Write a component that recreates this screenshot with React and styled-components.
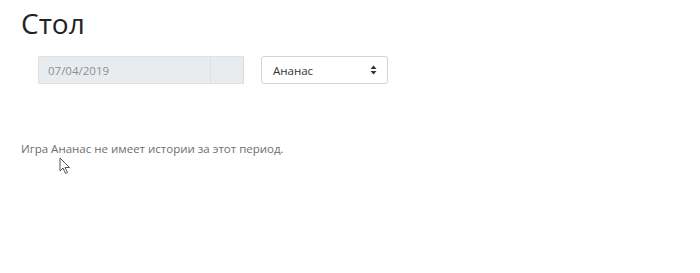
import React from "react";
import styled, { createGlobalStyle } from "styled-components";

const Global = createGlobalStyle`
  html, body { margin: 0; padding: 0; background: #fff; }
  body { font-family: "Open Sans", "Noto Sans", sans-serif; color: #212529; }
`;

const Page = styled.div`
  position: relative;
  width: 700px;
  height: 273px;
  padding: 0 0 0 21px;
  box-sizing: border-box;
`;

const Title = styled.h1`
  margin: 0;
  padding-top: 4px;
  font-size: 28px;
  font-weight: 400;
  line-height: 38px;
  color: #222;
`;

const Controls = styled.div`
  display: flex;
  align-items: center;
  gap: 17px;
  margin-top: 14px;
  padding-left: 17px;
`;

const DateGroup = styled.div`
  display: flex;
  width: 206px;
  height: 28px;
  background: #e9ecef;
  border: 1px solid #dee2e6;
  border-right-color: #d4d7db;
  border-radius: 1px;
  box-sizing: border-box;
`;

const DateText = styled.div`
  flex: 1;
  display: flex;
  align-items: center;
  padding-left: 9px;
  font-size: 11.5px;
  color: #8a9096;
  border-right: 1px solid #dcdfe3;
`;

const DateButton = styled.div`
  width: 32px;
`;

const Select = styled.div`
  display: flex;
  align-items: center;
  justify-content: space-between;
  width: 127px;
  height: 28px;
  padding: 0 10px 0 11px;
  box-sizing: border-box;
  border: 1px solid #ced4da;
  border-radius: 3px;
  font-size: 11.5px;
  color: #333;
`;

const Message = styled.p`
  margin: 57px 0 0;
  font-size: 11.5px;
  line-height: 16px;
  color: #6e6e6e;
`;

const Cursor = styled.svg`
  position: absolute;
  left: 59px;
  top: 157px;
`;

export default function App() {
  return (
    <Page>
      <Global />
      <Title>Стол</Title>
      <Controls>
        <DateGroup>
          <DateText>07/04/2019</DateText>
          <DateButton />
        </DateGroup>
        <Select>
          <span>Ананас</span>
          <svg width="7" height="10" viewBox="0 0 7 10">
            <path d="M3.5 0.5 L6.5 4 H0.5 Z" fill="#333" />
            <path d="M3.5 9.5 L6.5 6 H0.5 Z" fill="#333" />
          </svg>
        </Select>
      </Controls>
      <Message>Игра Ананас не имеет истории за этот период.</Message>
      <Cursor width="12" height="18" viewBox="0 0 12 18">
        <path
          d="M1 1 L1 14 L4 11 L6.5 16.5 L8.5 15.5 L6 10.5 L10.5 10.5 Z"
          fill="#fff"
          stroke="#555"
          strokeWidth="1"
          strokeLinejoin="round"
        />
      </Cursor>
    </Page>
  );
}
